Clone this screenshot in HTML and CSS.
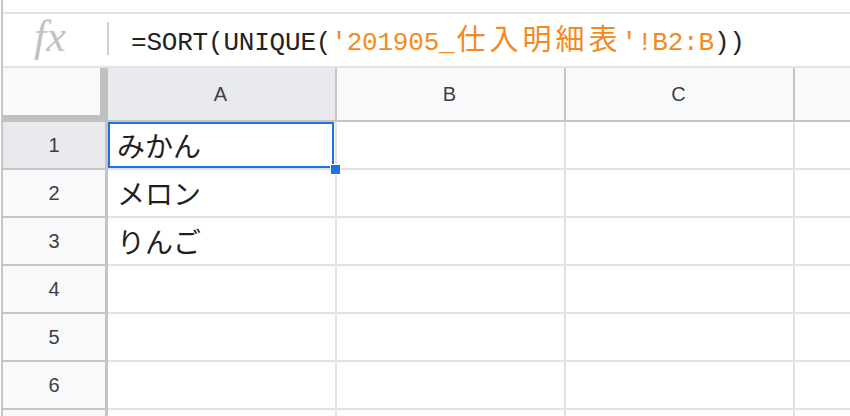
FILE: index.html
```html
<!DOCTYPE html>
<html lang="ja">
<head>
<meta charset="utf-8">
<title>Sheet</title>
<link rel="stylesheet" href="styles.css">
</head>
<body>
<div class="app">
  <div class="topstrip"></div>
  <div class="formula-bar">
    <div class="fx">fx</div>
    <div class="sep"></div>
    <div class="formula"><span class="tok">=SORT(UNIQUE(</span><span class="str">'201905_</span><span class="str cjk">仕入明細表</span><span class="str">'!B2:B</span><span class="tok">))</span></div>
  </div>
  <div class="grid">
    <div class="corner"></div>
    <div class="colh sel">A</div>
    <div class="colh">B</div>
    <div class="colh">C</div>
    <div class="colh"></div>

    <div class="rowh sel">1</div>
    <div class="cell active">みかん<span class="handle"></span></div>
    <div class="cell"></div><div class="cell"></div><div class="cell"></div>

    <div class="rowh">2</div>
    <div class="cell">メロン</div>
    <div class="cell"></div><div class="cell"></div><div class="cell"></div>

    <div class="rowh">3</div>
    <div class="cell">りんご</div>
    <div class="cell"></div><div class="cell"></div><div class="cell"></div>

    <div class="rowh">4</div>
    <div class="cell"></div><div class="cell"></div><div class="cell"></div><div class="cell"></div>

    <div class="rowh">5</div>
    <div class="cell"></div><div class="cell"></div><div class="cell"></div><div class="cell"></div>

    <div class="rowh">6</div>
    <div class="cell"></div><div class="cell"></div><div class="cell"></div><div class="cell"></div>

    <div class="rowh"></div>
    <div class="cell"></div><div class="cell"></div><div class="cell"></div><div class="cell"></div>
  </div>
</div>
</body>
</html>
```
FILE: styles.css
```css
* { box-sizing: border-box; }
html, body {
  margin: 0;
  padding: 0;
  background: #fff;
  width: 850px;
  height: 416px;
  overflow: hidden;
}
.app {
  width: 849px;
  height: 416px;
  margin-left: 1px;
  border-left: 2px solid #c6c6c6;
  overflow: hidden;
  font-family: "Liberation Sans", Arial, sans-serif;
}
.topstrip {
  height: 14px;
  border-bottom: 2px solid #e2e2e2;
}
.formula-bar {
  height: 54px;
  border-bottom: 2px solid #e2e2e2;
  display: flex;
  align-items: center;
}
.fx {
  width: 104px;
  padding-left: 31px;
  font-family: "Liberation Serif", "DejaVu Serif", serif;
  font-style: italic;
  font-size: 44px;
  color: #c2c2c2;
  line-height: 1;
  margin-top: -6px;
}
.sep {
  width: 2px;
  height: 33px;
  background: #d0d0d0;
  margin-top: -4px;
}
.formula {
  margin-left: 22px;
  margin-top: -6px;
  font-family: "Liberation Mono", "DejaVu Sans Mono", "Noto Sans CJK JP", monospace;
  font-size: 26px;
  color: #222;
  white-space: nowrap;
  letter-spacing: -0.2px;
}
.str { color: #f5891d; }
.cjk {
  font-family: "Noto Sans CJK JP", sans-serif;
  font-size: 29px;
  letter-spacing: 4px;
  margin-left: 2px;
}
.grid {
  display: grid;
  grid-template-columns: 105px 229px 229px 229px 229px;
  grid-template-rows: 54px repeat(7, 48px);
}
.corner {
  background: #f8f9fa;
  border-right: 8px solid #c0c0c0;
  border-bottom: 7px solid #c0c0c0;
}
.colh {
  background: #f8f9fa;
  border-right: 2px solid #c4c4c4;
  border-bottom: 2px solid #c4c4c4;
  display: flex;
  align-items: center;
  justify-content: center;
  font-size: 20px;
  color: #3c4043;
  padding-right: 2px;
}
.colh.sel, .rowh.sel { background: #e8eaed; }
.rowh {
  background: #f8f9fa;
  border-right: 3px solid #c4c4c4;
  border-bottom: 2px solid #c4c4c4;
  display: flex;
  align-items: center;
  justify-content: center;
  font-size: 20px;
  color: #3c4043;
}
.cell {
  border-right: 2px solid #e2e3e3;
  border-bottom: 2px solid #e2e3e3;
  display: flex;
  align-items: center;
  padding-left: 9px;
  font-family: "Noto Sans CJK JP", sans-serif;
  font-size: 28px;
  color: #1f1f1f;
  white-space: nowrap;
}
.cell.active {
  position: relative;
}
.cell.active::after {
  content: "";
  position: absolute;
  top: 0;
  left: 0;
  right: 1px;
  bottom: 0;
  border: 2px solid #1a73e8;
}
.handle {
  position: absolute;
  right: -6px;
  bottom: -7px;
  width: 11px;
  height: 11px;
  background: #1a73e8;
  border: 1px solid #fff;
  z-index: 2;
}
```
